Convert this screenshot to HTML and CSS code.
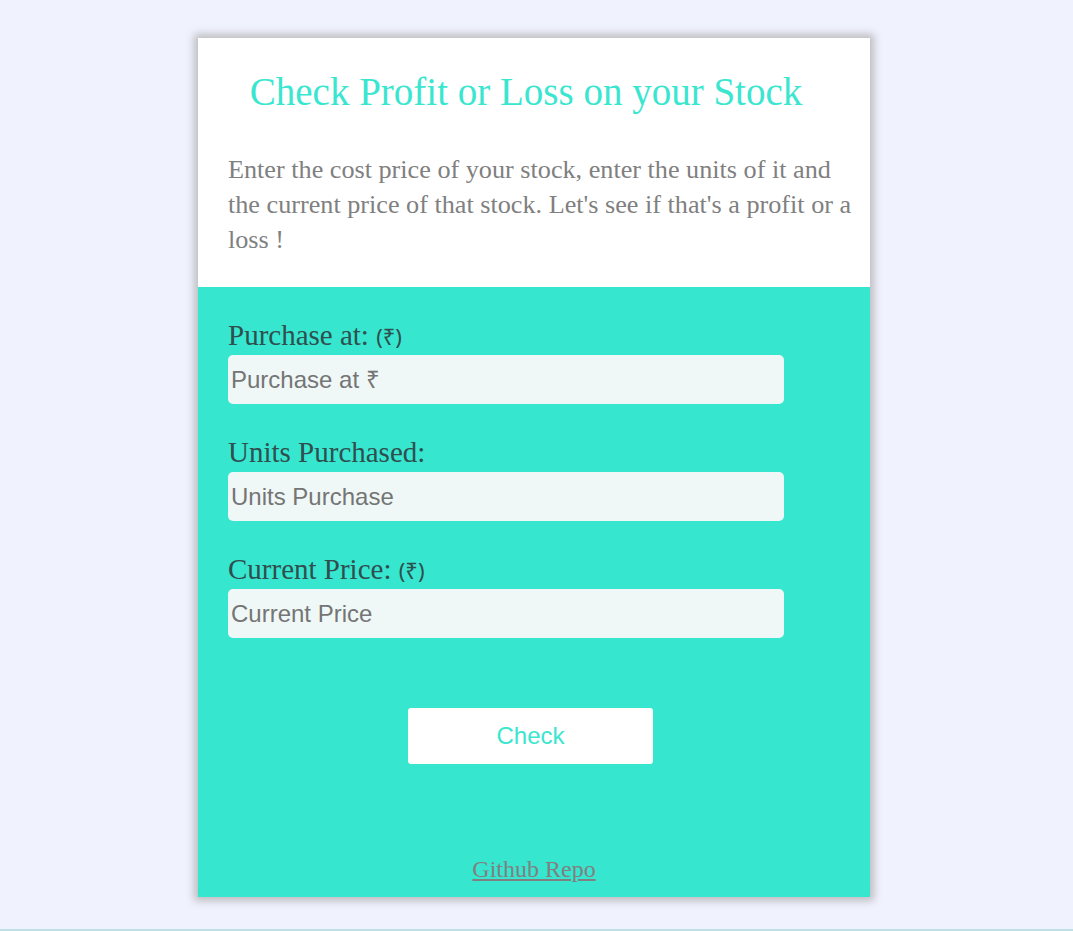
FILE: index.html
```html
<!DOCTYPE html>
<html lang="en">
<head>
<meta charset="utf-8">
<title>Check Profit or Loss on your Stock</title>
<link rel="stylesheet" href="styles.css">
</head>
<body>
<div class="page">
  <main class="card">
    <header class="intro">
      <h1 class="title">Check Profit or Loss on your Stock</h1>
      <p class="desc">Enter the cost price of your stock, enter the units of it and the current price of that stock. Let's see if that's a profit or a loss !</p>
    </header>
    <section class="form">
      <div class="field">
        <label class="label" for="buy">Purchase at: <span class="rs">(₹)</span></label>
        <input class="input" id="buy" type="number" placeholder="Purchase at ₹">
      </div>
      <div class="field">
        <label class="label" for="units">Units Purchased:</label>
        <input class="input" id="units" type="number" placeholder="Units Purchase">
      </div>
      <div class="field">
        <label class="label" for="cur">Current Price: <span class="rs">(₹)</span></label>
        <input class="input" id="cur" type="number" placeholder="Current Price">
      </div>
      <div class="actions">
        <button class="btn" type="button">Check</button>
      </div>
      <div class="footer">
        <a class="repo" href="#">Github Repo</a>
      </div>
    </section>
  </main>
</div>
</body>
</html>
```
FILE: styles.css
```css
html, body {
  margin: 0;
  padding: 0;
}
body {
  background: #f0f2fe;
  font-family: "Liberation Serif", "Times New Roman", serif;
}
.page {
  box-sizing: border-box;
  height: 931px;
  padding-top: 38px;
  padding-left: 198px;
  border-bottom: 2px solid #bfe0e6;
  overflow: hidden;
}
.card {
  width: 672px;
  height: 859px;
  background: #37e6cf;
  box-shadow: 0 0 8px 4px #bdbdc0;
  display: flex;
  flex-direction: column;
}
.intro {
  background: #ffffff;
  padding: 31px 12px 30px 30px;
}
.title {
  margin: 0;
  padding-right: 34px;
  font-weight: normal;
  font-size: 39px;
  line-height: 45px;
  text-align: center;
  color: #3ae6cf;
}
.desc {
  margin: 38px 0 0 0;
  font-size: 26.2px;
  line-height: 35px;
  color: #808080;
}
.form {
  flex: 1;
  padding: 31px 30px 0 30px;
  display: flex;
  flex-direction: column;
}
.field {
  display: flex;
  flex-direction: column;
  margin-bottom: 31px;
}
.label {
  font-size: 29px;
  line-height: 34px;
  height: 34px;
  color: #2f4f4f;
  margin-bottom: 3px;
}
.rs {
  font-family: "Noto Sans", "DejaVu Sans", sans-serif;
  font-size: 22px;
  line-height: 1;
}
.input {
  box-sizing: border-box;
  width: 556px;
  height: 49px;
  border: none;
  border-radius: 5px;
  background: #eff8f7;
  padding: 0 3px;
  font-family: "Liberation Sans", Arial, sans-serif;
  font-size: 24px;
  color: #333;
  outline: none;
}
.input::placeholder {
  color: #757575;
}
.actions {
  margin-top: 39px;
  padding-left: 180px;
}
.btn {
  width: 245px;
  height: 56px;
  border: none;
  border-radius: 3px;
  background: #ffffff;
  color: #3ae6cf;
  font-family: "Liberation Sans", Arial, sans-serif;
  font-size: 24px;
  cursor: pointer;
}
.footer {
  margin-top: 91px;
  text-align: center;
}
.repo {
  font-size: 24px;
  line-height: 28px;
  color: #808080;
}
```
